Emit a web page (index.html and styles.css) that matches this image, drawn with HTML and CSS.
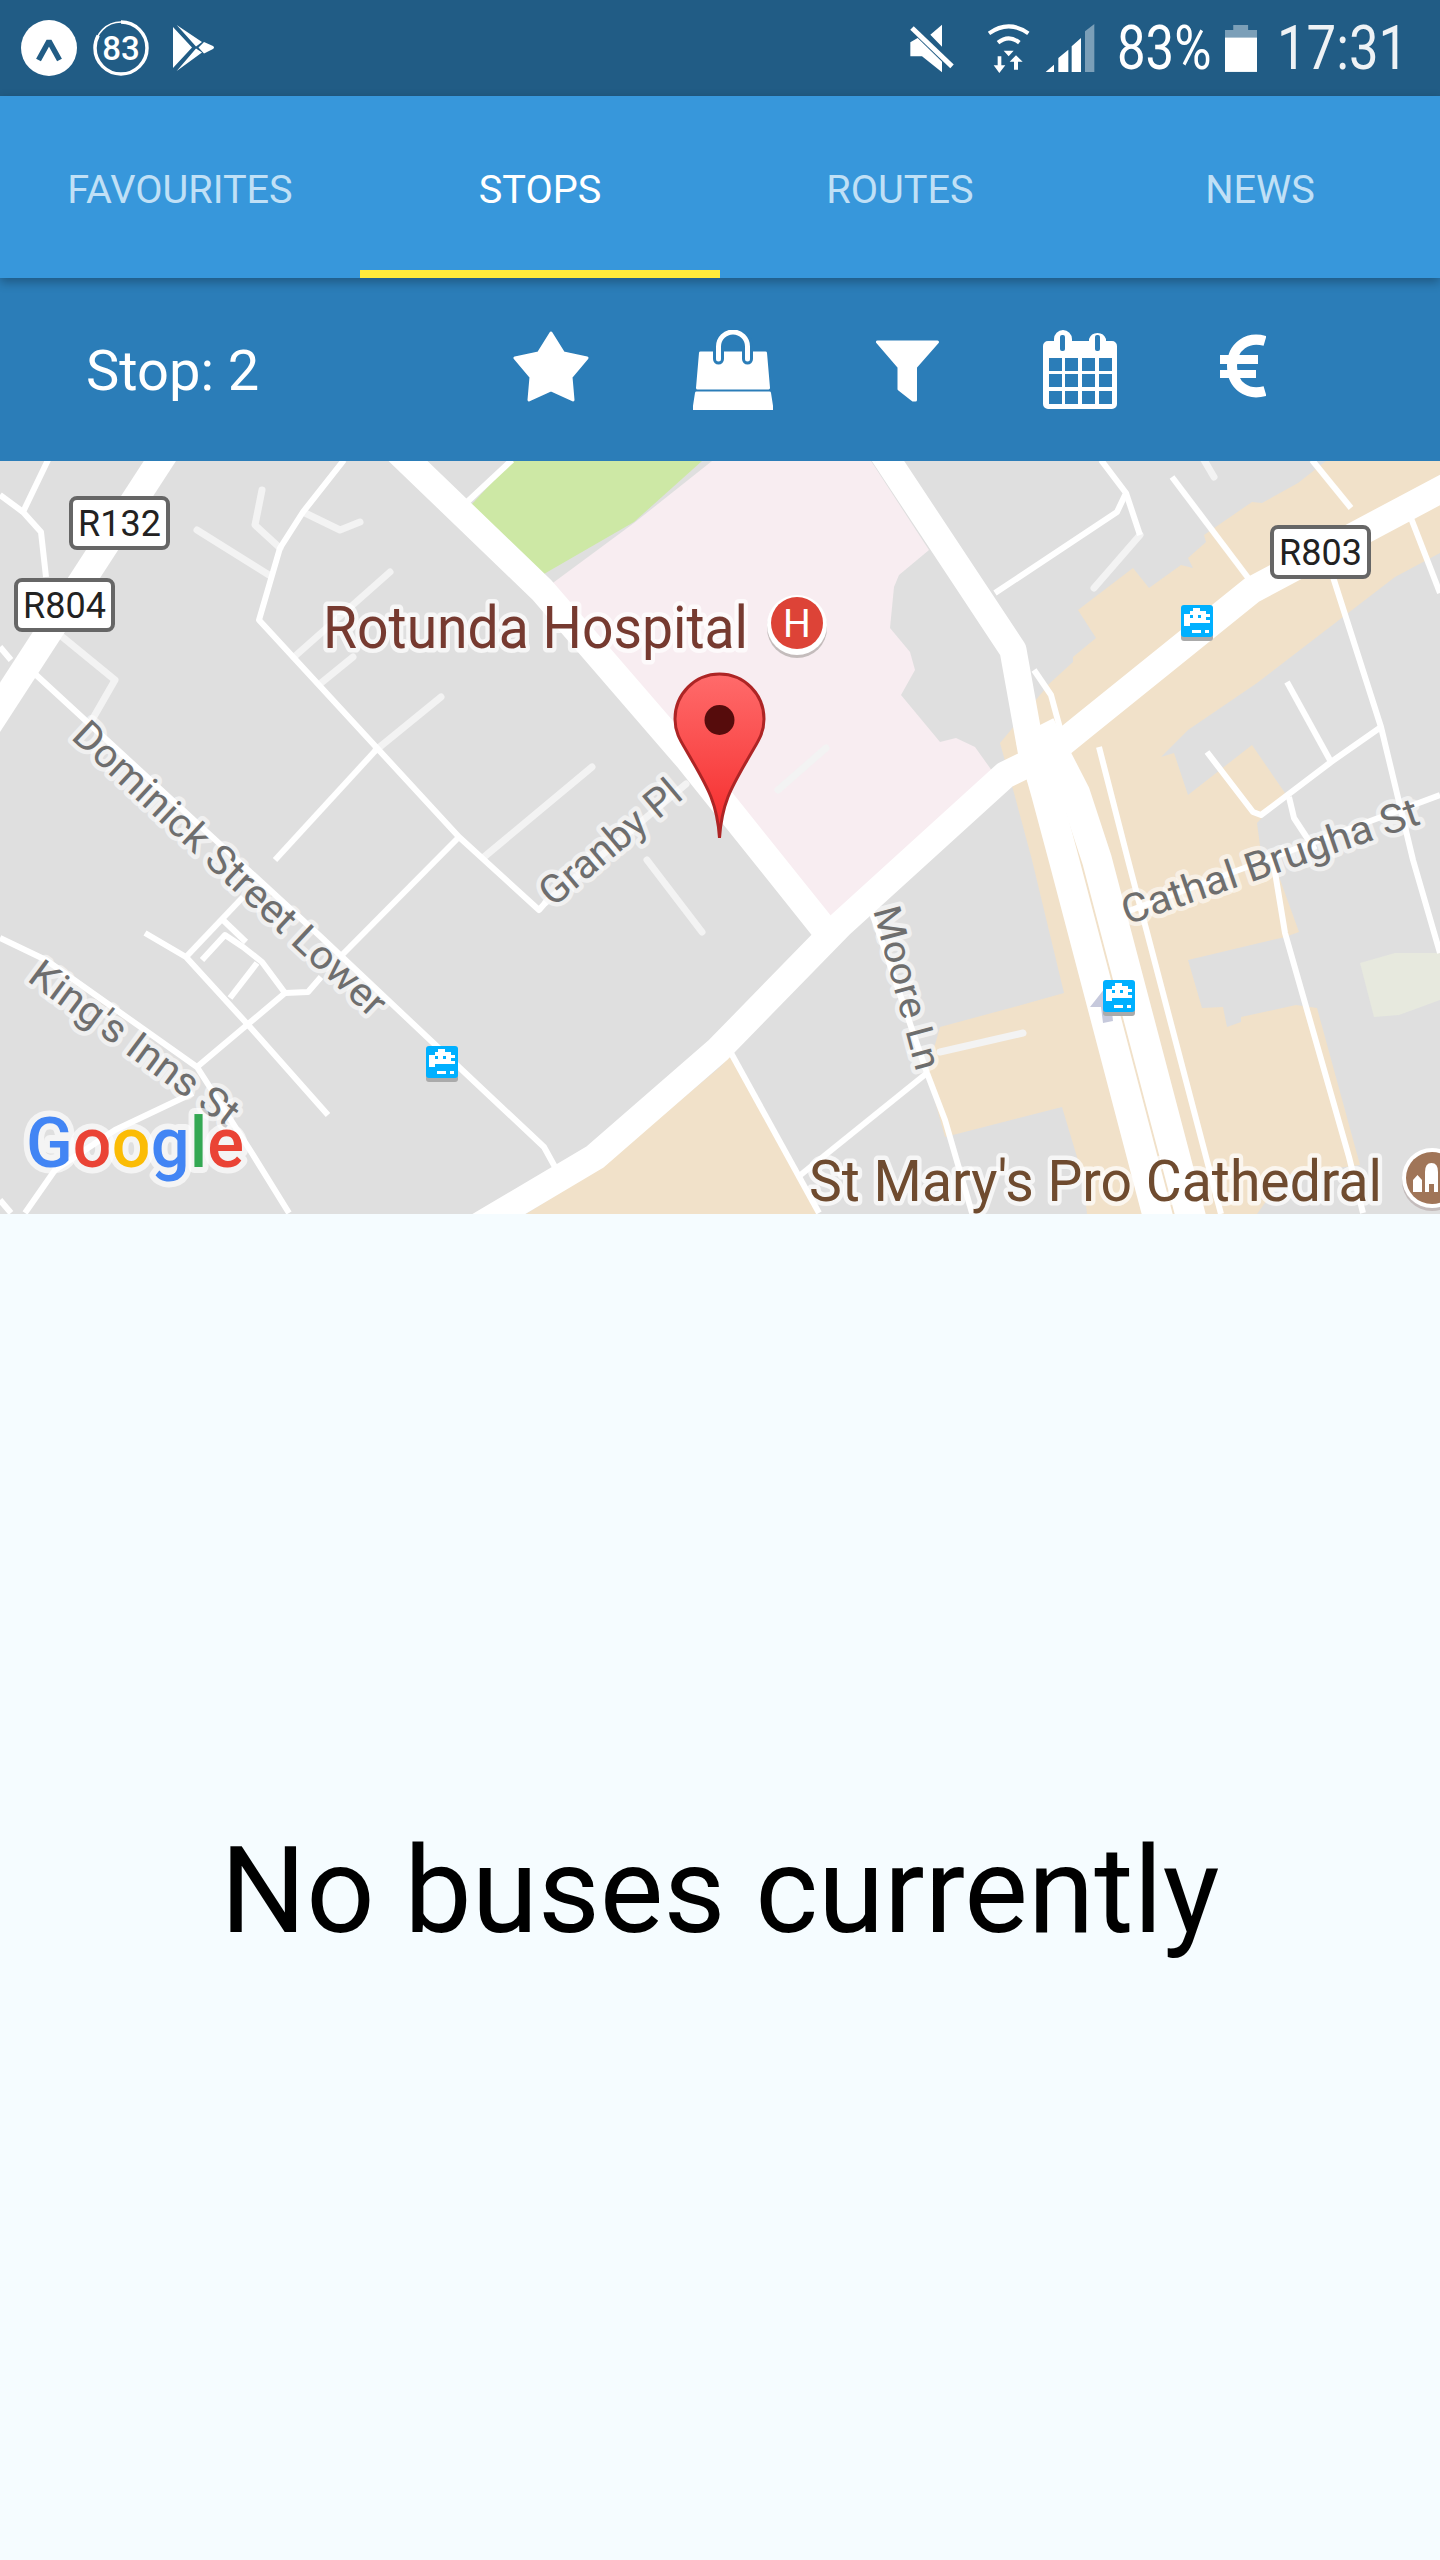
FILE: index.html

```html
<!DOCTYPE html>
<html>
<head>
  <title>Stops</title>
  <link rel="stylesheet" href="styles.css">
</head>
<body>
  <svg class="defs" width="0" height="0">
    <defs>
      <linearGradient id="pin-fill" x1="0" y1="0" x2="0" y2="1">
        <stop offset="0" stop-color="#ff6b6b"/>
        <stop offset="1" stop-color="#f52a2a"/>
      </linearGradient>
      <symbol id="bus" viewBox="0 0 32 36">
        <rect class="bus-shadow" x="0" y="3" width="32" height="33" rx="3"/>
        <rect class="bus-box" width="32" height="32" rx="3"/>
        <path class="bus-glyph" d="M12 3h7v3h6v3h4v3h-4v3h4v3h-4H9v3h10H3V9h6V6h3z"/>
        <rect class="bus-box" x="9" y="10" width="3" height="3"/>
        <rect class="bus-box" x="17" y="10" width="3" height="3"/>
        <rect class="bus-glyph" x="11" y="25" width="9" height="3"/>
        <rect class="bus-glyph" x="24" y="25" width="4" height="3"/>
      </symbol>
    </defs>
  </svg>

  <div class="status-bar">
    <div class="status-left">
      <svg class="ic-lambda" viewBox="0 0 56 56">
        <circle class="white" cx="28" cy="28" r="28"/>
        <path class="lambda" d="M17.5 40 L28 21 L38.5 40"/>
      </svg>
      <svg class="ic-ring" viewBox="0 0 56 56">
        <circle class="ring-thin" cx="28" cy="28" r="26"/>
        <circle class="ring-thick" cx="28" cy="28" r="26" pathLength="100"/>
        <text class="ring-num" x="28" y="40">83</text>
      </svg>
      <svg class="ic-play" viewBox="0 0 42 46">
        <path class="white" d="M0 2 L19 22.5 L0 43 Z M3.700 0 L29 17 L23 21.500 Z M3.700 46 L29 27.500 L23 23.500 Z M31 17 L40 21 Q42 22.500 40 24 L31 28.500 L25.500 22.500 Z"/>
      </svg>
    </div>
    <div class="status-right">
      <svg class="ic-mute" viewBox="39 27 132 150">
        <path class="white" d="M100 62 L135 32 L135 98 Z M40 85 L62 72 L135 143 L135 175 L75 127 L40 127 Z"/>
        <path class="mute-slash" d="M45 42 L165 157"/>
      </svg>
      <svg class="ic-wifi" viewBox="262 25 132 150">
        <path class="wifi-arc" d="M271 56 Q330 14 389 56"/>
        <path class="wifi-arc" d="M298 84 Q330 58 362 84"/>
        <path class="white" d="M315 108 L345 108 L330 125 Z M297 125 H308 V152 H320 L302 175 L285 152 H297 Z M346 165 H358 V141 H372 L352 122 L333 141 H346 Z"/>
      </svg>
      <svg class="ic-signal" viewBox="440 25 150 150">
        <path class="white" d="M442 172 L467 150 V172 Z M480 172 V130 L510 105 V172 Z M520 172 V95 L548 70 V172 Z"/>
        <path class="dim" d="M560 172 V50 L588 28 V172 Z"/>
      </svg>
      <span class="status-text pct">83%</span>
      <svg class="ic-batt" viewBox="978 28 97 146">
        <path class="dim" d="M1003 30 H1048 V45 H1075 V70 H978 V45 H1003 Z"/>
        <rect class="white" x="978" y="68" width="97" height="104"/>
      </svg>
      <span class="status-text clock">17:31</span>
    </div>
  </div>

  <div class="tabs">
    <div class="tab">FAVOURITES</div>
    <div class="tab active">STOPS</div>
    <div class="tab">ROUTES</div>
    <div class="tab">NEWS</div>
  </div>

  <div class="toolbar">
    <div class="stop-label">Stop: 2</div>
    <svg class="tool-star" viewBox="0 0 76 80">
      <path class="white-round" d="M38 3 L50.500 23 L74 28 L58 47 L60 70 L38 60 L16 70 L18 47 L2 28 L25.500 23 Z"/>
    </svg>
    <svg class="tool-bag" viewBox="0 0 80 80">
      <path class="white-round" d="M7.500 23 H72.500 L75.500 58 H4.500 Z M3.500 63 H76.500 L79 79 H1 Z"/>
      <path class="bag-gap" d="M25.500 29 V16.500 A14.500 14.500 0 0 1 54.500 16.500 V29"/>
      <path class="bag-handle" d="M25.500 29 V16.500 A14.500 14.500 0 0 1 54.500 16.500 V29"/>
    </svg>
    <svg class="tool-funnel" viewBox="0 0 63 80">
      <path class="white-round" d="M1.500 12 H61.500 L39.500 37 V70 L37 70 L23 59 V37 Z"/>
    </svg>
    <svg class="tool-cal" viewBox="0 0 74 80">
      <path class="white" d="M11 11 V9 A9 9 0 0 1 29 9 V11 H46 V9 A9 9 0 0 1 63 9 V11 H69 A5 5 0 0 1 74 16 V74 A5 5 0 0 1 69 79 H5 A5 5 0 0 1 0 74 V16 A5 5 0 0 1 5 11 Z"/>
      <g class="blue">
        <rect x="17" y="5" width="5" height="16" rx="2"/>
        <rect x="52" y="5" width="5" height="16" rx="2"/>
        <rect x="6" y="28" width="13" height="13"/><rect x="22" y="28" width="13" height="13"/><rect x="39" y="28" width="13" height="13"/><rect x="56" y="28" width="13" height="13"/>
        <rect x="6" y="44" width="13" height="13"/><rect x="22" y="44" width="13" height="13"/><rect x="39" y="44" width="13" height="13"/><rect x="56" y="44" width="13" height="13"/>
        <rect x="6" y="61" width="13" height="13"/><rect x="22" y="61" width="13" height="13"/><rect x="39" y="61" width="13" height="13"/><rect x="56" y="61" width="13" height="13"/>
      </g>
    </svg>
    <svg class="tool-euro" viewBox="0 0 46 80">
      <path class="euro-arc" d="M45 11 C28 6 12 16 12 36 C12 56 28 66 45 61"/>
      <rect class="white" x="0" y="25" width="38" height="9"/>
      <rect class="white" x="0" y="40" width="36" height="8"/>
    </svg>
  </div>

  <svg class="map" viewBox="0 461 1440 753" width="1440" height="753">
    <rect class="land" x="0" y="461" width="1440" height="753"/>

    <path class="park" d="M512 461 L471 505 L537 578 L634 522 L702 461 Z"/>
    <path class="hospital" d="M546 588 L634 523 L712 461 L871 461 L929 550 L899 575 L894 587 L890 628 L910 652 L915 670 L901 695 L940 742 L956 738 L975 747 L995 775 L825 930 Z"/>
    <path class="built" d="M1326 461 L1298 483 L1262 503 L1252 502 L1204 535 L1206 542 L1188 558 L1193 568 L1181 565 L1149 588 L1133 568 L1078 610 L1096 638 L1073 657 L1073 662 L1050 683 L1000 743 L1014 793 L1032 860 L1064 993 L1014 1007 L940 1027 L927 1073 L945 1137 L1062 1107 L1083 1177 L1087 1214 L1257 1214 L1285 1175 L1360 1165 L1317 1008 L1296 1005 L1241 1017 L1241 1022 L1227 1027 L1223 1007 L1202 1008 L1188 960 L1285 937 L1299 932 L1273 860 L1262 860 L1257 823 L1285 793 L1252 745 L1188 795 L1174 753 L1161 757 L1188 730 L1257 683 L1395 577 L1440 553 L1440 461 Z"/>
    <path class="built" d="M720 1067 L731 1055 L818 1214 L526 1214 L601 1167 Z"/>
    <path class="pale" d="M1360 963 L1395 953 L1440 953 L1440 1000 L1399 1015 L1374 1017 Z"/>

    <!-- side streets -->
    <g class="road-light">
      <path d="M262 490 L255 525 L280 548"/>
      <path d="M197 530 L269 575"/>
      <path d="M305 513 L340 530 L360 522"/>
      <path d="M390 572 L294 657"/>
      <path d="M321 683 L353 657"/>
      <path d="M376 750 L441 697"/>
      <path d="M484 857 L592 767"/>
      <path d="M546 902 L686 784"/>
      <path d="M647 860 L702 932"/>
      <path d="M60 635 L115 680 L92 720"/>
      <path d="M1140 535 L1094 588"/>
      <path d="M1204 460 L1214 477"/>
      <path d="M940 1052 L1023 1033"/>
      <path d="M778 790 L826 748"/>
    </g>
    <g class="road-minor">
      <path d="M48 460 L23 512 L41 532 L46 577"/>
      <path d="M0 495 L23 512"/>
      <path d="M344 460 L303 512 L280 548 L259 620 L459 837 L539 910 L546 902"/>
      <path d="M376 750 L275 860"/>
      <path d="M459 837 L340 957"/>
      <path d="M34 673 L321 937 L427 1037 L544 1147 L555 1167"/>
      <path d="M0 647 L11 660"/>
      <path d="M512 460 L466 503"/>
      <path d="M0 938 L46 960 L197 1067 L250 1150 L289 1213"/>
      <path d="M145 933 L186 957 L250 1027 L328 1115"/>
      <path d="M186 957 L243 897"/>
      <path d="M202 960 L225 935 L243 947 L262 962 L285 993 L308 992 L321 977"/>
      <path d="M223 920 L246 942"/>
      <path d="M257 963 L230 998"/>
      <path d="M285 993 L197 1067"/>
      <path d="M193 1093 L115 1130 L55 1170 L25 1213"/>
      <path d="M0 1200 L11 1213"/>
      <path d="M995 593 L1117 512 L1126 493 L1101 460"/>
      <path d="M1126 493 L1140 535"/>
      <path d="M1172 477 L1255 587"/>
      <path d="M1312 460 L1351 508"/>
      <path d="M1409 513 L1440 593"/>
      <path d="M1333 577 L1381 727 L1413 860 L1440 953"/>
      <path d="M1381 727 L1331 762 L1261 815 L1253 812 L1207 752"/>
      <path d="M1287 682 L1331 762"/>
      <path d="M1289 797 L1294 818 L1315 850"/>
      <path d="M1273 860 L1285 933 L1349 1157 L1363 1213"/>
      <path d="M1440 795 L1118 915"/>
      <path d="M1034 670 L1051 695 L1064 743"/>
      <path d="M1099 747 L1128 860 L1221 1214"/>
      <path d="M871 910 L927 1073 L945 1120 L972 1213"/>
      <path d="M927 1073 L798 1177"/>
      <path d="M731 1053 L819 1213"/>
    </g>
    <!-- main roads -->
    <g class="road-major">
      <path d="M180 430 L-20 738"/>
      <path d="M380 434 L408 461 L542 590 L689 760 L825 930"/>
      <path d="M1470 474 L1252 590 L1087 723 L1050 753 L1005 775 L840 925 L718 1050 L595 1157 L455 1240"/>
      <path d="M870 434 L888 461 L1013 650 L1031 750 L1046 793"/>
      <path class="road-carriage" d="M1031 740 L1046 793 L1064 860 L1164 1240"/>
      <path class="road-carriage" d="M1040 725 L1075 793 L1097 860 L1197 1240"/>
    </g>
    <path class="road-arrow" d="M1109 983 L1090 1007 L1101 1007 L1103 1023 L1113 1021 Z"/>

    <!-- labels -->
    <text class="lbl-street" transform="translate(70 738) rotate(43)" textLength="412" lengthAdjust="spacingAndGlyphs">Dominick Street Lower</text>
    <text class="lbl-street" transform="translate(26 980) rotate(36.500)" textLength="250" lengthAdjust="spacingAndGlyphs">King's Inns St</text>
    <text class="lbl-street" transform="translate(553 908) rotate(-40)" textLength="172" lengthAdjust="spacingAndGlyphs">Granby Pl</text>
    <text class="lbl-street lbl-small" transform="translate(873 910) rotate(75)" textLength="168" lengthAdjust="spacingAndGlyphs">Moore Ln</text>
    <text class="lbl-street" transform="translate(1127 925) rotate(-19)" textLength="312" lengthAdjust="spacingAndGlyphs">Cathal Brugha St</text>
    <text class="lbl-hospital" x="323" y="648" textLength="425" lengthAdjust="spacingAndGlyphs">Rotunda Hospital</text>
    <text class="lbl-church" x="809" y="1201" textLength="573" lengthAdjust="spacingAndGlyphs">St Mary's Pro Cathedral</text>

    <text class="lbl-google" x="26" y="1167" textLength="218" lengthAdjust="spacingAndGlyphs"><tspan class="g-blue">G</tspan><tspan class="g-red">o</tspan><tspan class="g-yellow">o</tspan><tspan class="g-blue">g</tspan><tspan class="g-green">l</tspan><tspan class="g-red">e</tspan></text>

    <!-- road shields -->
    <g class="shield"><rect x="71" y="498" width="97" height="50" rx="6"/><text x="119.500" y="536">R132</text></g>
    <g class="shield"><rect x="16" y="580" width="97" height="50" rx="6"/><text x="64.500" y="618">R804</text></g>
    <g class="shield"><rect x="1272" y="527" width="97" height="50" rx="6"/><text x="1320.500" y="565">R803</text></g>

    <!-- markers -->
    <circle class="poi-shadow" cx="797" cy="628" r="30"/>
    <circle class="white" cx="797" cy="625" r="30"/>
    <circle class="poi-red" cx="797" cy="623" r="26"/>
    <text class="poi-h" x="797" y="637">H</text>

    <circle class="poi-shadow" cx="1432" cy="1181" r="30"/>
    <circle class="white" cx="1432" cy="1178" r="30"/>
    <circle class="poi-brown" cx="1432" cy="1178" r="26"/>
    <path class="white" d="M1425 1192 V1172 Q1425 1163 1431.500 1163 Q1438 1163 1438 1172 V1192 H1434 V1184 H1429 V1192 Z M1413 1192 V1180 L1417.500 1175 L1422 1180 V1192 Z"/>

    <use href="#bus" x="1181" y="605" width="32" height="36"/>
    <use href="#bus" x="426" y="1046" width="32" height="36"/>
    <use href="#bus" x="1103" y="980" width="32" height="36"/>

    <path class="pin" d="M719.500 838 C717 800 706 785 686 750 C680 740 675 732 675 719 C675 694 695 674 719.500 674 C744 674 764 694 764 719 C764 732 759 740 753 750 C733 785 722 800 719.500 838 Z"/>
    <circle class="pin-hole" cx="719.500" cy="720" r="15"/>
  </svg>

  <div class="content">
    <div class="empty-text">No buses currently</div>
  </div>
</body>
</html>
```

FILE: styles.css

```css
body { margin: 0; width: 1440px; height: 2560px; display: flex; flex-direction: column; background: #f5fcff; font-family: Roboto, sans-serif; overflow: hidden; }
.defs { position: absolute; }
svg { display: block; flex: none; }

.white { fill: #fff; }
.dim { fill: #7b9fb8; }
.blue { fill: #2b7db8; }
.white-round { fill: #fff; stroke: #fff; stroke-width: 3; stroke-linejoin: round; }

/* status bar */
.status-bar { height: 96px; flex: none; background: #215c85; display: flex; justify-content: space-between; align-items: center; padding: 0 42px 0 21px; }
.status-left { display: flex; align-items: center; }
.status-right { display: flex; align-items: center; }
.ic-lambda { width: 56px; height: 56px; }
.ic-ring { width: 56px; height: 56px; margin-left: 16px; }
.ic-play { width: 42px; height: 46px; margin-left: 24px; }
.lambda { fill: none; stroke: #215c85; stroke-width: 5.500; stroke-linejoin: bevel; }
.ring-thin { fill: none; stroke: #fff; stroke-width: 1.500; }
.ring-thick { fill: none; stroke: #fff; stroke-width: 3.500; stroke-dasharray: 83 100; transform: rotate(-90deg); transform-origin: 28px 28px; }
.ring-num { font-size: 33px; font-weight: 500; fill: #fff; text-anchor: middle; }
.ic-mute { width: 44px; height: 50px; }
.mute-slash { fill: none; stroke: #fff; stroke-width: 15; }
.ic-wifi { width: 44px; height: 50px; margin-left: 32px; }
.wifi-arc { fill: none; stroke: #fff; stroke-width: 12; }
.ic-signal { width: 50px; height: 50px; margin-left: 15px; }
.ic-batt { width: 32px; height: 49px; margin-left: 14px; }
.status-text { display: block; color: #fff; font-size: 62px; line-height: 62px; transform-origin: left center; white-space: nowrap; }
.pct { width: 94px; margin-left: 22px; transform: scaleX(.82); }
.clock { width: 121px; margin-left: 20px; transform: scaleX(.85); color: #eef2f5; }

/* tabs */
.tabs { height: 182px; flex: none; display: flex; background: #3797db; position: relative; z-index: 2; box-shadow: 0 4px 10px rgba(0, 0, 0, .3); }
.tab { width: 360px; box-sizing: border-box; padding-top: 71px; text-align: center; font-size: 39.700px; line-height: 46px; color: #c0e0f6; }
.tab.active { color: #fff; border-bottom: 8px solid #ffeb3b; }

/* toolbar */
.toolbar { height: 183px; flex: none; display: flex; align-items: center; gap: 103.500px; background: #2b7db8; }
.stop-label { width: 513px; box-sizing: border-box; padding: 2px 0 0 86px; margin-right: -103.500px; font-size: 56px; color: #fff; }
.tool-star { width: 76px; height: 80px; }
.tool-bag { width: 80px; height: 80px; }
.tool-funnel { width: 63px; height: 80px; }
.tool-cal { width: 74px; height: 80px; }
.tool-euro { width: 46px; height: 80px; }
.bag-gap { fill: none; stroke: #2b7db8; stroke-width: 11; stroke-linecap: round; }
.bag-handle { fill: none; stroke: #fff; stroke-width: 5; stroke-linecap: round; }
.euro-arc { fill: none; stroke: #fff; stroke-width: 10; }

/* map */
.map { flex: none; }
.land { fill: #dfdfdf; }
.park { fill: #cde8a5; }
.hospital { fill: #f8edf1; }
.built { fill: #f1e1c9; }
.pale { fill: #e7e9de; }
.road-major, .road-minor, .road-light { fill: none; stroke-linejoin: round; }
.road-major { stroke: #fff; stroke-width: 27; }
.road-carriage { stroke-width: 30; }
.road-minor { stroke: #fff; stroke-width: 6; }
.road-light { stroke: #f3f3f3; stroke-width: 7; stroke-linecap: round; }
.road-arrow { fill: #c6c9dc; }

.lbl-street, .lbl-hospital, .lbl-church, .lbl-google { paint-order: stroke; stroke-linejoin: round; }
.lbl-street { font-size: 40px; fill: #6e6e6e; stroke: rgba(255, 255, 255, .55); stroke-width: 9px; }
.lbl-small { font-size: 38px; }
.lbl-hospital { font-size: 59px; fill: #763a30; stroke: rgba(255, 255, 255, .7); stroke-width: 9px; }
.lbl-church { font-size: 57px; fill: #6f4b2f; stroke: rgba(255, 255, 255, .7); stroke-width: 9px; }
.lbl-google { font-size: 70px; font-weight: 500; stroke: rgba(255, 255, 255, .65); stroke-width: 12px; }
.g-blue { fill: #4285f4; }
.g-red { fill: #ea4335; }
.g-yellow { fill: #fbbc05; }
.g-green { fill: #34a853; }

.shield rect { fill: #fff; stroke: #666; stroke-width: 4; }
.shield text { font-size: 36px; fill: #222; text-anchor: middle; }

.poi-shadow { fill: #c4bcbc; }
.poi-red { fill: #dd4337; }
.poi-brown { fill: #a07558; }
.poi-h { font-size: 39px; fill: #fff; text-anchor: middle; }

.bus-box { fill: #00b0ff; }
.bus-shadow { fill: #aaa; }
.bus-glyph { fill: #fff; }

.pin { fill: url(#pin-fill); stroke: #ad2525; stroke-width: 3; }
.pin-hole { fill: #560c0c; }

/* list area */
.content { flex: 1; display: flex; align-items: center; justify-content: center; padding-top: 8px; background: #f5fcff; }
.empty-text { font-size: 120px; color: #000; }
```
